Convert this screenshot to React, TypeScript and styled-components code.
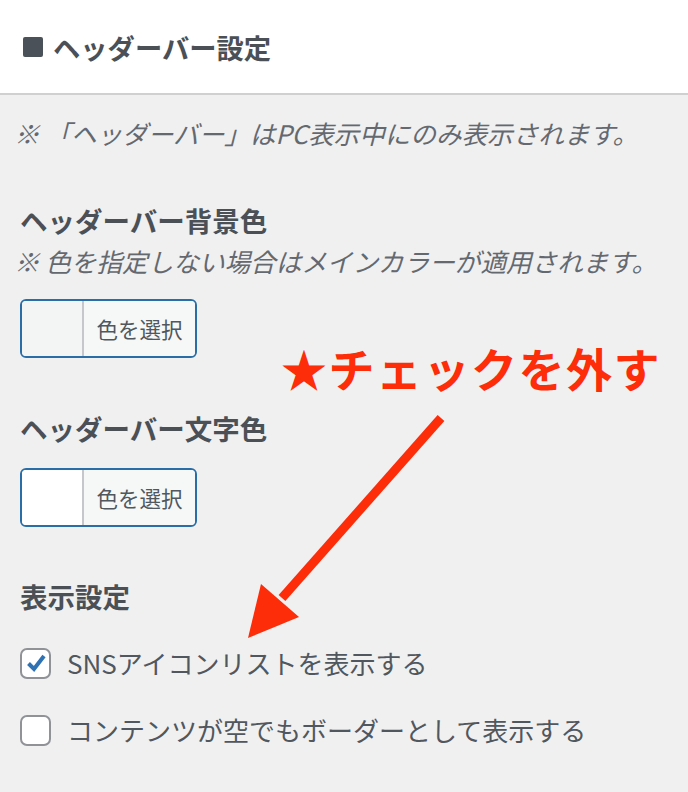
import React from "react";
import styled, { createGlobalStyle } from "styled-components";

const GlobalStyle = createGlobalStyle`
  html, body {
    margin: 0;
    padding: 0;
    background: #f0f0f1;
  }
  body {
    font-family: "Noto Sans CJK JP", "Noto Sans", sans-serif;
  }
`;

const Page = styled.div`
  position: relative;
  width: 688px;
  height: 792px;
  overflow: hidden;
  background: #f0f0f1;
`;

const Header = styled.header`
  height: 95px;
  box-sizing: border-box;
  background: #ffffff;
  border-bottom: 2px solid #d0d0d1;
  display: flex;
  align-items: center;
  gap: 10px;
  padding-left: 23px;
`;

const TitleMark = styled.span`
  width: 20px;
  height: 20px;
  border-radius: 2px;
  background: #4b5158;
  flex: none;
`;

const Title = styled.h1`
  margin: 0;
  font-size: 27.3px;
  line-height: 36px;
  font-weight: 700;
  color: #4a5056;
`;

const Body = styled.main`
  display: flex;
  flex-direction: column;
  align-items: flex-start;
  padding: 0 0 0 20px;
`;

const Note = styled.p<{ $mt: number }>`
  margin: ${(p) => p.$mt}px 0 0 -6px;
  font-size: 25.6px;
  line-height: 35px;
  font-style: italic;
  color: #646970;
  white-space: nowrap;
`;

const Heading = styled.h2<{ $mt: number }>`
  margin: ${(p) => p.$mt}px 0 0 0;
  font-size: 27.5px;
  line-height: 36px;
  font-weight: 700;
  color: #4a5056;
  white-space: nowrap;
`;

const ColorButton = styled.button<{ $mt: number }>`
  margin-top: ${(p) => p.$mt}px;
  width: 177px;
  height: 59px;
  box-sizing: border-box;
  padding: 0;
  display: flex;
  align-items: stretch;
  border: 2px solid #2a6ea8;
  border-radius: 6px;
  overflow: hidden;
  background: #f6f7f7;
  cursor: pointer;
  font-family: inherit;
`;

const Swatch = styled.span<{ $color: string }>`
  width: 60px;
  flex: none;
  background: ${(p) => p.$color};
  border-right: 2px solid #c6c7ca;
`;

const ButtonLabel = styled.span`
  flex: 1;
  display: flex;
  align-items: center;
  justify-content: center;
  font-size: 21.5px;
  color: #50575e;
  background: #f6f7f7;
`;

const CheckRow = styled.label<{ $mt: number }>`
  margin-top: ${(p) => p.$mt}px;
  display: flex;
  align-items: center;
  gap: 16px;
  cursor: pointer;
`;

const Box = styled.span`
  width: 31px;
  height: 31px;
  box-sizing: border-box;
  border: 2px solid #8f9297;
  border-radius: 7px;
  background: #ffffff;
  display: flex;
  align-items: center;
  justify-content: center;
  flex: none;
`;

const CheckLabel = styled.span`
  font-size: 26px;
  line-height: 34px;
  color: #50575e;
  white-space: nowrap;
`;

const Callout = styled.div`
  position: absolute;
  left: 281px;
  top: 344px;
  font-size: 46px;
  line-height: 1;
  font-weight: 700;
  letter-spacing: 1.5px;
  color: #fd2c09;
  white-space: nowrap;
`;

const ArrowLayer = styled.svg`
  position: absolute;
  left: 0;
  top: 0;
  width: 688px;
  height: 792px;
  pointer-events: none;
`;

function Checkbox({ checked, label, mt }: { checked: boolean; label: string; mt: number }) {
  return (
    <CheckRow $mt={mt}>
      <Box>
        {checked && (
          <svg width="22" height="22" viewBox="0 0 22 22">
            <path d="M3.5 11.5 L9 17 L19 4" fill="none" stroke="#2f72b4" strokeWidth="4" strokeLinejoin="miter" />
          </svg>
        )}
      </Box>
      <CheckLabel>{label}</CheckLabel>
    </CheckRow>
  );
}

export default function App() {
  return (
    <>
      <GlobalStyle />
      <Page>
        <Header>
          <TitleMark />
          <Title>ヘッダーバー設定</Title>
        </Header>
        <Body>
          <Note $mt={20}>※ 「ヘッダーバー」はPC表示中にのみ表示されます。</Note>
          <Heading $mt={52}>ヘッダーバー背景色</Heading>
          <Note $mt={5}>※ 色を指定しない場合はメインカラーが適用されます。</Note>
          <ColorButton $mt={21}>
            <Swatch $color="#f3f4f4" />
            <ButtonLabel>色を選択</ButtonLabel>
          </ColorButton>
          <Heading $mt={52}>ヘッダーバー文字色</Heading>
          <ColorButton $mt={22}>
            <Swatch $color="#ffffff" />
            <ButtonLabel>色を選択</ButtonLabel>
          </ColorButton>
          <Heading $mt={51}>表示設定</Heading>
          <Checkbox mt={32} checked label="SNSアイコンリストを表示する" />
          <Checkbox mt={33} checked={false} label="コンテンツが空でもボーダーとして表示する" />
        </Body>
        <Callout>★チェックを外す</Callout>
        <ArrowLayer viewBox="0 0 688 792">
          <line x1="441" y1="418" x2="282" y2="598" stroke="#fd2c09" strokeWidth="9" />
          <polygon points="248,638 261,584 299,617" fill="#fd2c09" />
        </ArrowLayer>
      </Page>
    </>
  );
}
